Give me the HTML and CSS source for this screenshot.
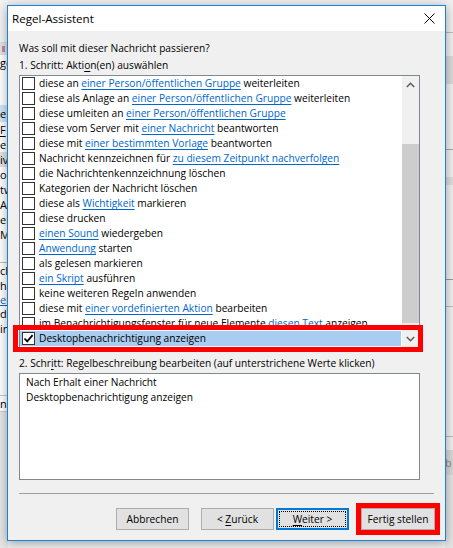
FILE: index.html
```html
<!DOCTYPE html>
<html lang="de">
<head>
<meta charset="utf-8">
<title>Regel-Assistent</title>
<link rel="stylesheet" href="styles.css">
</head>
<body>
<div class="desk">
  <div class="strip-l">
    <div class="sl sl-top"></div>
    <div class="sl sl-band"><span class="ico"></span></div>
    <div class="sl sl-row">gel</div>
    <div class="sl sl-gap1"></div>
    <div class="sl sl-sel">e F</div>
    <div class="sl sl-row"><u>F</u></div>
    <div class="sl sl-row">eln</div>
    <div class="sl sl-gray">iv</div>
    <div class="sl sl-row">opp</div>
    <div class="sl sl-row">tw</div>
    <div class="sl sl-row">Au</div>
    <div class="sl sl-row">er</div>
    <div class="sl sl-row">Mc</div>
    <div class="sl sl-line"></div>
    <div class="sl sl-row">ch</div>
    <div class="sl sl-row">ha</div>
    <div class="sl sl-link">eiv</div>
    <div class="sl sl-row">d</div>
    <div class="sl sl-row">in</div>
    <div class="sl sl-gap2"></div>
    <div class="sl sl-row">n</div>
    <div class="sl sl-bottom"></div>
  </div>
  <div class="mid"></div>
  <div class="strip-r">
    <div class="sr sr-a"></div>
    <div class="sr sr-band"></div>
    <div class="sr sr-b"></div>
    <div class="sr sr-band2"></div>
    <div class="sr sr-c"></div>
    <div class="sr sr-d"></div>
    <div class="sr sr-e"></div>
    <div class="sr sr-band3">b</div>
    <div class="sr sr-f"></div>
  </div>
</div>

<div class="dialog">
  <div class="titlebar">
    <span class="title">Regel-Assistent</span>
    <svg class="close" width="11" height="11" viewBox="0 0 11 11"><path d="M0.5 0.5 L10.5 10.5 M10.5 0.5 L0.5 10.5" stroke="#000" stroke-width="1" fill="none"/></svg>
  </div>
  <div class="body">
    <div class="label">Was soll mit dieser Nachricht passieren?</div>
    <div class="label">1. Schritt: Akti<u>o</u>n(en) auswählen</div>
    <div class="listwrap">
      <div class="list">
        <div class="rows">
          <div class="row"><span class="cb"></span><span class="tx">diese an <span class="lk">einer Person/öffentlichen Gruppe</span> weiterleiten</span></div>
          <div class="row"><span class="cb"></span><span class="tx">diese als Anlage an <span class="lk">einer Person/öffentlichen Gruppe</span> weiterleiten</span></div>
          <div class="row"><span class="cb"></span><span class="tx">diese umleiten an <span class="lk">einer Person/öffentlichen Gruppe</span></span></div>
          <div class="row"><span class="cb"></span><span class="tx">diese vom Server mit <span class="lk">einer Nachricht</span> beantworten</span></div>
          <div class="row"><span class="cb"></span><span class="tx">diese mit <span class="lk">einer bestimmten Vorlage</span> beantworten</span></div>
          <div class="row"><span class="cb"></span><span class="tx">Nachricht kennzeichnen für <span class="lk">zu diesem Zeitpunkt nachverfolgen</span></span></div>
          <div class="row"><span class="cb"></span><span class="tx">die Nachrichtenkennzeichnung löschen</span></div>
          <div class="row"><span class="cb"></span><span class="tx">Kategorien der Nachricht löschen</span></div>
          <div class="row"><span class="cb"></span><span class="tx">diese als <span class="lk">Wichtigkeit</span> markieren</span></div>
          <div class="row"><span class="cb"></span><span class="tx">diese drucken</span></div>
          <div class="row"><span class="cb"></span><span class="tx"><span class="lk">einen Sound</span> wiedergeben</span></div>
          <div class="row"><span class="cb"></span><span class="tx"><span class="lk">Anwendung</span> starten</span></div>
          <div class="row"><span class="cb"></span><span class="tx">als gelesen markieren</span></div>
          <div class="row"><span class="cb"></span><span class="tx"><span class="lk">ein Skript</span> ausführen</span></div>
          <div class="row"><span class="cb"></span><span class="tx">keine weiteren Regeln anwenden</span></div>
          <div class="row"><span class="cb"></span><span class="tx">diese mit <span class="lk">einer vordefinierten Aktion</span> bearbeiten</span></div>
          <div class="row"><span class="cb"></span><span class="tx">im Benachrichtigungsfenster für neue Elemente <span class="lk">diesen Text</span> anzeigen</span></div>
          <div class="row sel"><span class="cb checked"><svg width="11" height="11" viewBox="0 0 11 11"><path d="M1.5 5.5 L4.2 8.3 L9.6 2.2" stroke="#000" stroke-width="1.8" fill="none"/></svg></span><span class="tx">Desktopbenachrichtigung anzeigen</span></div>
        </div>
        <div class="scrollbar">
          <div class="sb-btn"><svg width="9" height="6" viewBox="0 0 9 6"><path d="M0.8 5 L4.5 1.3 L8.2 5" stroke="#606060" stroke-width="1.6" fill="none"/></svg></div>
          <div class="sb-track1"></div>
          <div class="sb-thumb"></div>
          <div class="sb-track2"></div>
          <div class="sb-btn"><svg width="9" height="6" viewBox="0 0 9 6"><path d="M0.8 1 L4.5 4.7 L8.2 1" stroke="#606060" stroke-width="1.6" fill="none"/></svg></div>
        </div>
      </div>
      <div class="hl hl-list"></div>
    </div>
    <div class="label label2">2. Schr<u>i</u>tt: Regelbeschreibung bearbeiten (auf unterstrichene Werte klicken)</div>
    <div class="desc">
      <div>Nach Erhalt einer Nachricht</div>
      <div>Desktopbenachrichtigung anzeigen</div>
    </div>
    <div class="sep"></div>
    <div class="buttons">
      <div class="btn"><span>Abbrechen</span></div>
      <div class="btn b-back"><span>&lt; <u>Z</u>urück</span></div>
      <div class="btn b-next"><span><u>W</u>eiter &gt;</span></div>
      <div class="finwrap">
        <div class="btn b-fin"><span>Fertig stellen</span></div>
        <div class="hl hl-fin"></div>
      </div>
    </div>
  </div>
</div>
</body>
</html>
```

FILE: styles.css
```css
* { box-sizing: border-box; }
html, body { margin: 0; padding: 0; }
body {
  width: 453px;
  height: 548px;
  overflow: hidden;
  font-family: "Open Sans", "Noto Sans", "Liberation Sans", sans-serif;
  font-size: 10.2px;
  color: #000;
  background: #e9e9e9;
  position: relative;
}

/* background application */
.desk {
  display: flex;
  width: 453px;
  height: 548px;
}
.strip-l {
  width: 8px;
  display: flex;
  flex-direction: column;
  background: #fff;
  overflow: hidden;
  font-size: 11px;
}
.sl {
  white-space: nowrap;
  overflow: hidden;
  line-height: 15px;
  height: 15px;
  padding-left: 0;
  flex: none;
}
.sl-top { height: 43px; background: #f3f3f3; border-bottom: 1px solid #dcdcdc; }
.sl-band { height: 12px; background: #e4e4e4; }
.sl-band .ico { display: block; margin: 3px 0 0 2px; width: 3px; height: 6px; background: #c98a9a; }
.sl-gap1 { height: 35px; }
.sl-sel { height: 17px; background: #cde6f7; line-height: 17px; }
.sl-row { height: 15px; }
.sl-gray { background: #e3e3e3; }
.sl-line { height: 21px; border-bottom: 1px solid #bfbfbf; }
.sl-link { color: #1a5fb4; text-decoration: underline; height: 13px; line-height: 13px; }
.sl-gap2 { height: 60px; border-bottom: 1px solid #c8c8c8; }
.sl-bottom { flex: 1; background: #e6e6e6; border-top: 1px solid #cfcfcf; }

.mid { flex: 1; background: #f0f0f0; }

.strip-r {
  width: 8px;
  display: flex;
  flex-direction: column;
  background: #f0f0f0;
  overflow: hidden;
  font-size: 11px;
  color: #888;
}
.sr { flex: none; }
.sr-a { height: 33px; border-bottom: 1px solid #bdbdbd; }
.sr-band { height: 28px; margin-top: 23px; background: #dadada; }
.sr-b { height: 66px; border-bottom: 1px solid #a8a8a8; }
.sr-band2 { height: 8px; margin-top: 27px; background: #dedede; }
.sr-c { height: 95px; border-bottom: 1px solid #9a9a9a; }
.sr-d { height: 27px; border-bottom: 1px solid #c0c0c0; }
.sr-e { height: 130px; border-bottom: 1px solid #bcbcbc; }
.sr-band3 { height: 25px; margin-top: 13px; background: #d8d8d8; line-height: 25px; }
.sr-f { flex: 1; background: #e4e4e4; }

/* dialog window */
.dialog {
  position: absolute;
  left: 7px;
  top: 5px;
  width: 439px;
  height: 536px;
  border: 1px solid #1883d7;
  background: #f0f0f0;
  box-shadow: 0 2px 10px rgba(0, 0, 0, 0.35);
  display: flex;
  flex-direction: column;
}
.titlebar {
  height: 25px;
  background: #fff;
  display: flex;
  align-items: center;
  justify-content: space-between;
  padding: 0 10px 0 4px;
  flex: none;
}
.title {
  font-size: 11.6px;
  line-height: 25px;
}
.close { display: block; margin-top: 0px; }

.body {
  padding: 9px 10px 0 11px;
  display: flex;
  flex-direction: column;
}
.label {
  line-height: 17px;
  height: 17px;
  white-space: nowrap;
}
u { text-decoration: underline; text-underline-offset: 2px; }

.listwrap {
  position: relative;
  margin-top: 1px;
  width: 401px;
  height: 273px;
}
.list {
  width: 401px;
  height: 273px;
  border: 1px solid #828790;
  background: #fff;
  display: flex;
}
.rows {
  flex: 1;
  overflow: hidden;
  display: flex;
  flex-direction: column;
  padding-top: 0;
}
.row {
  height: 15px;
  flex: none;
  display: flex;
  align-items: center;
  padding-left: 2px;
  white-space: nowrap;
  line-height: 15px;
}
.row.sel { background: #a9cdf1; margin-right: 1px; }
.cb {
  width: 13px;
  height: 13px;
  border: 1px solid #333;
  background: #fff;
  flex: none;
  display: flex;
  align-items: center;
  justify-content: center;
}
.cb svg { display: block; }
.tx { margin-left: 4px; }
.lk {
  color: #0066cc;
  text-decoration: underline;
  text-underline-offset: 2px;
}

.scrollbar {
  width: 17px;
  flex: none;
  background: #f0f0f0;
  display: flex;
  flex-direction: column;
}
.sb-btn {
  height: 17px;
  flex: none;
  display: flex;
  align-items: center;
  justify-content: center;
}
.sb-track1 { height: 51px; flex: none; }
.sb-thumb { height: 179px; flex: none; background: #cdcdcd; }
.sb-track2 { flex: 1; }

.hl {
  position: absolute;
  border: 5px solid #ff0000;
  pointer-events: none;
}
.hl-list {
  left: -6px;
  top: 250px;
  width: 410px;
  height: 27px;
}

.label2 {
  margin-top: 7px;
  line-height: 16px;
  height: 16px;
}
.desc {
  margin-top: 2px;
  width: 401px;
  height: 107px;
  border: 1px solid #828790;
  background: #fff;
  padding: 1px 0 0 6px;
  line-height: 15px;
}
.sep {
  margin-top: 13px;
  width: 415px;
  height: 1px;
  background: #a0a0a0;
}
.buttons {
  margin-top: 14px;
  display: flex;
  justify-content: flex-end;
  align-items: center;
}
.btn {
  width: 73px;
  height: 22px;
  border: 1px solid #adadad;
  background: #e1e1e1;
  display: flex;
  align-items: center;
  justify-content: center;
  white-space: nowrap;
  position: relative;
}
.b-back { margin-left: 12px; }
.b-next {
  margin-left: 2px;
  border: 2px solid #0078d7;
}
.b-next::after {
  content: "";
  position: absolute;
  left: 1px;
  top: 1px;
  right: 1px;
  bottom: 1px;
  border: 1px dotted #000;
}
.finwrap {
  position: relative;
  margin-left: 12px;
}
.b-fin { width: 74px; }
.hl-fin {
  left: -5px;
  top: -5px;
  width: 84px;
  height: 32px;
}
```
